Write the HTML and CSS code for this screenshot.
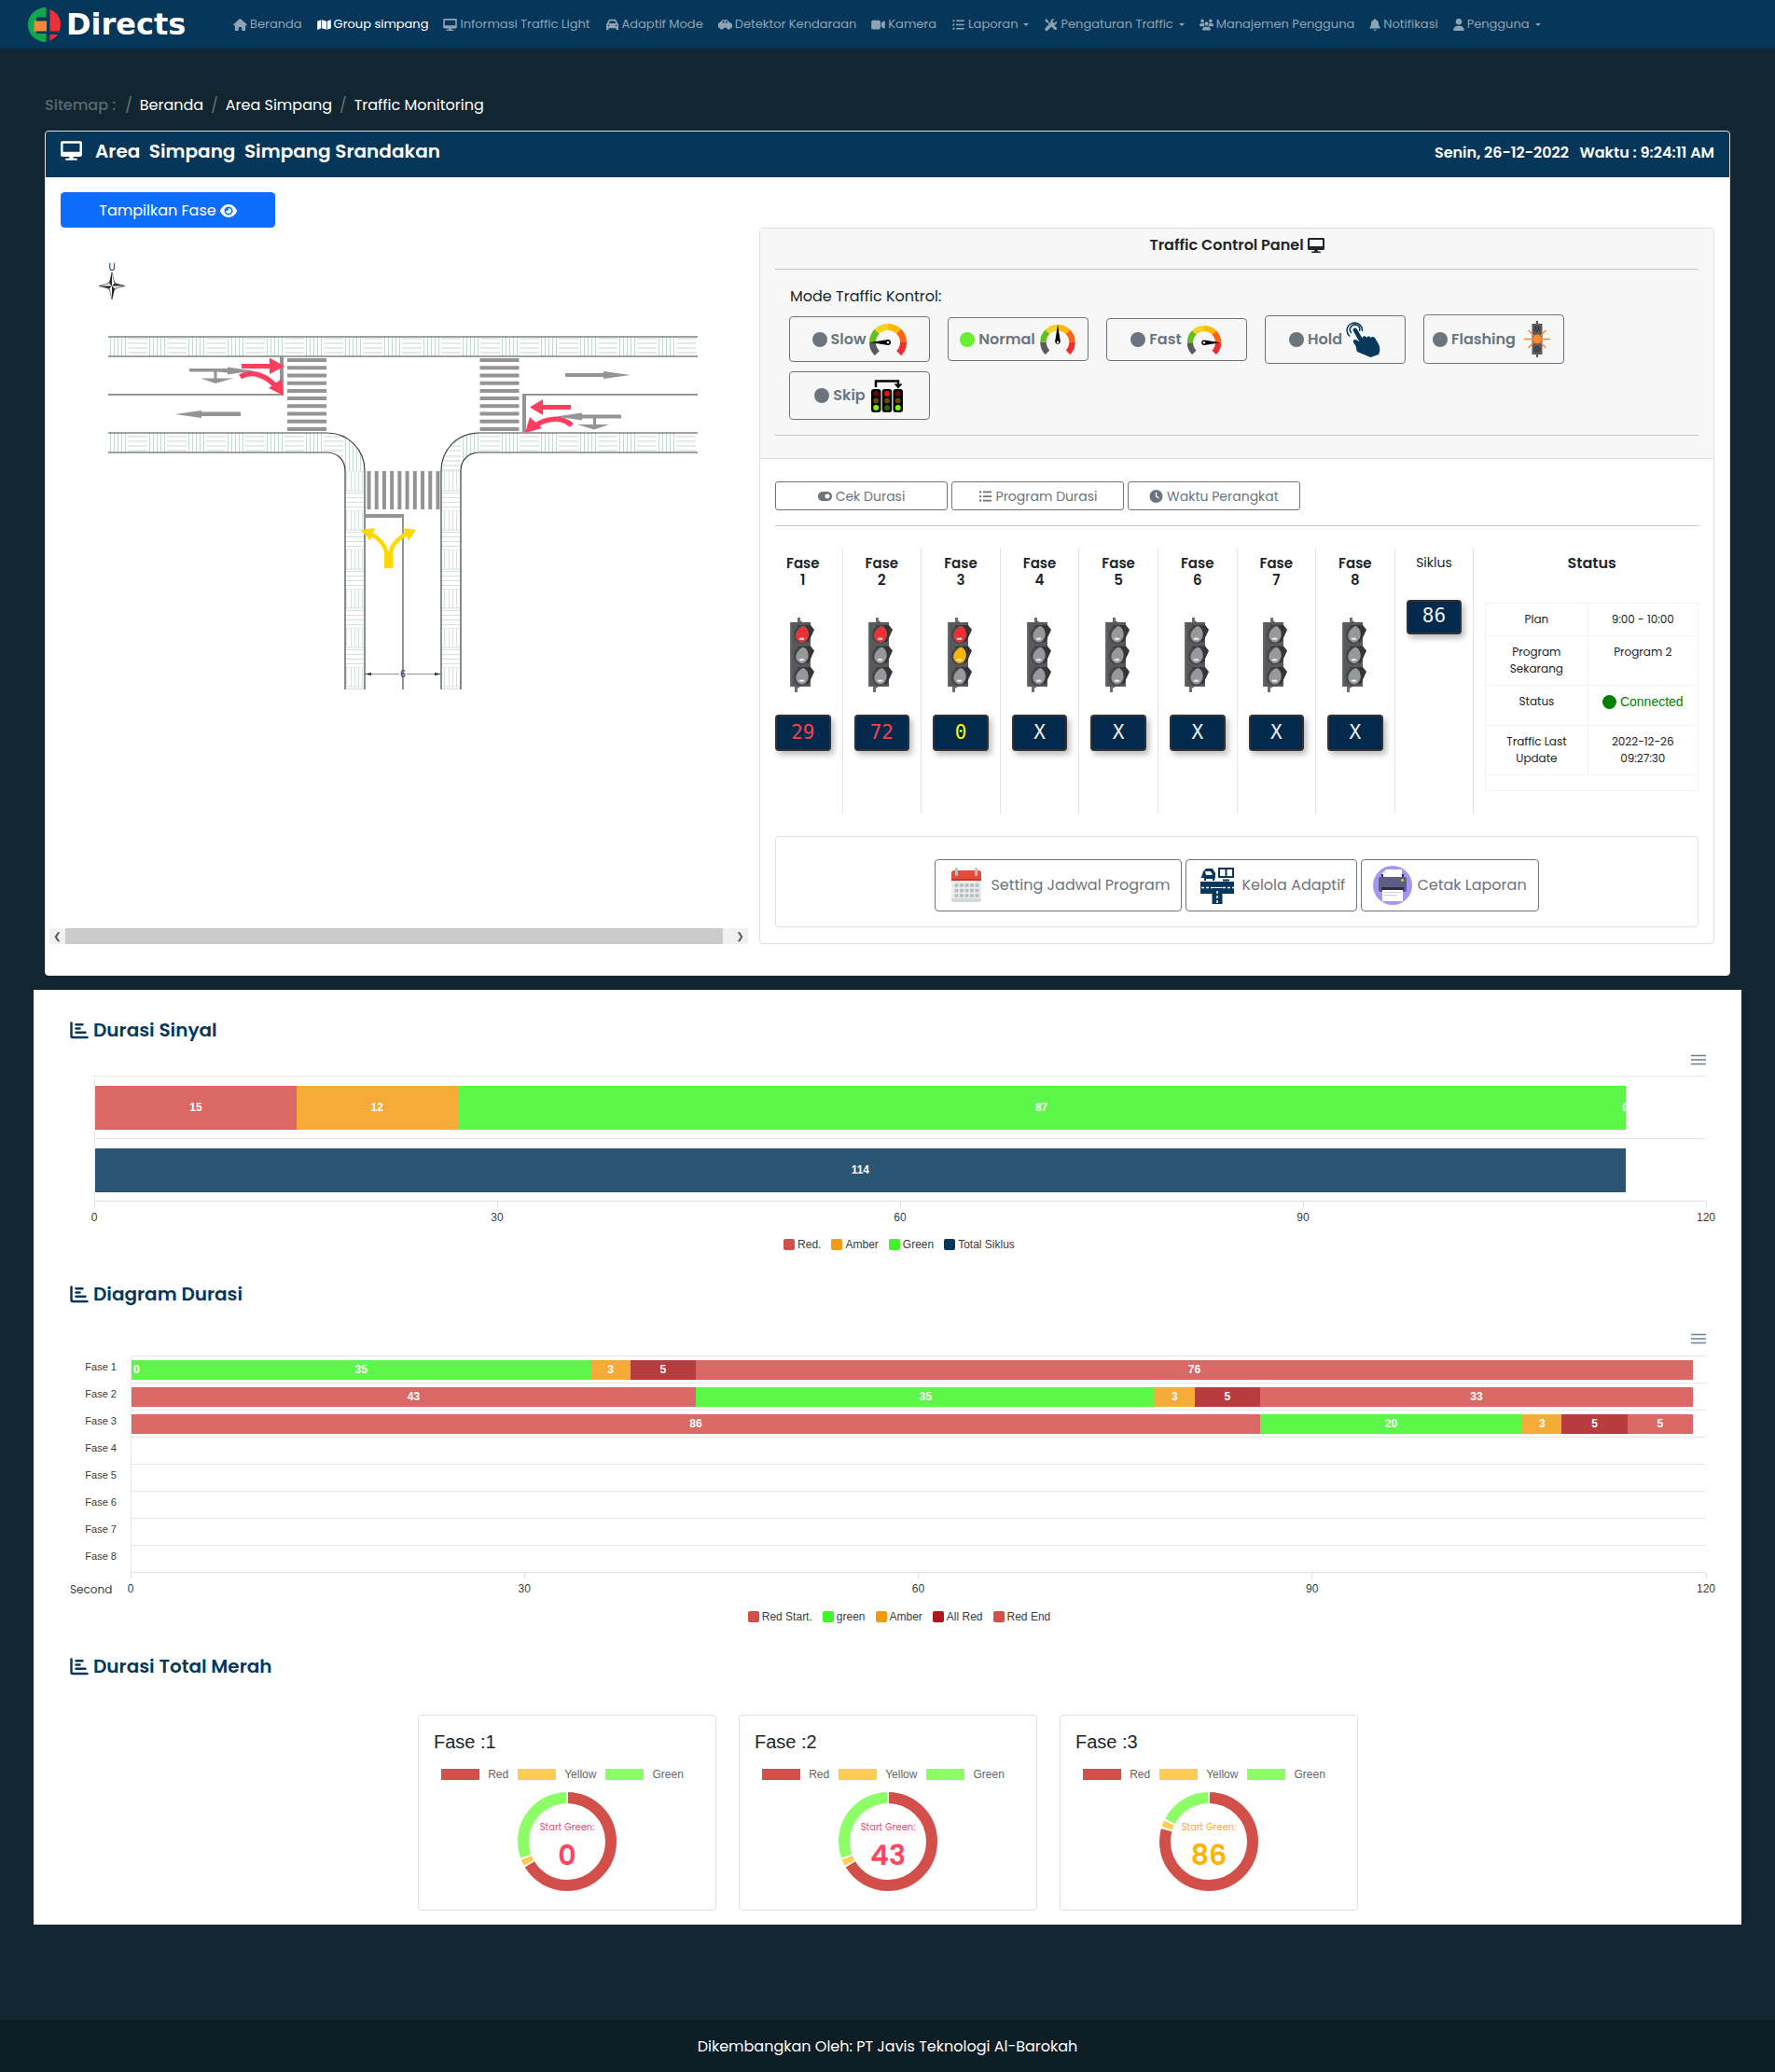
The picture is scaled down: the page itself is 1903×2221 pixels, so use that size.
FILE: index.html
```html
<!DOCTYPE html>
<html lang="id">
<head>
<meta charset="utf-8">
<meta name="viewport" content="width=device-width, initial-scale=1">
<title>Directs - Traffic Monitoring</title>
<link rel="stylesheet" href="styles.css">
</head>
<body>
<svg class="defs" aria-hidden="true">
  <symbol id="i-home" viewBox="0 0 576 512"><path d="M575.8 255.5c0 18-15 32.1-32 32.1h-32l.7 160.2c0 2.7-.2 5.4-.5 8.1V472c0 22.1-17.9 40-40 40H392c-22.1 0-40-17.9-40-40v-88c0-17.7-14.3-32-32-32h-64c-17.7 0-32 14.3-32 32v88c0 22.1-17.9 40-40 40h-80c-22.1 0-40-17.9-40-40V287.600H32c-18 0-32-14-32-32.100c0-9 3-17 10-24L266.400 8c7-7 15-8 22-8s15 2 21 7L564.800 231.500c8 7 12 15 11 24z"/></symbol>
  <symbol id="i-map" viewBox="0 0 576 512"><path d="M0 132c0-14 8-26 20-31L160 48v360L32 461c-16 6-32-4-32-20zM192 48l192 64v352l-192-64zM416 104l128-53c16-6 32 4 32 20v309c0 14-8 26-20 31l-140 53z"/></symbol>
  <symbol id="i-desktop" viewBox="0 0 576 512"><path d="M528 0H48C21.500 0 0 21.500 0 48v320c0 26.500 21.500 48 48 48h192l-16 48h-72c-13.300 0-24 10.700-24 24s10.700 24 24 24h272c13.300 0 24-10.700 24-24s-10.700-24-24-24h-72l-16-48h192c26.500 0 48-21.500 48-48V48c0-26.500-21.500-48-48-48zm-16 288H64V64h448v224z"/></symbol>
  <symbol id="i-car" viewBox="0 0 512 512"><path fill-rule="evenodd" d="M39 196 75 94c14-38 50-62 90-62h182c40 0 76 24 90 62l36 102c24 10 39 32 39 60v192c0 18-14 32-32 32h-32c-18 0-32-14-32-32v-48H96v48c0 18-14 32-32 32H32c-18 0-32-14-32-32V256c0-28 15-50 39-60zm71-4h292l-26-75c-5-13-16-21-29-21H165c-13 0-24 8-29 21zM96 256a32 32 0 1 0 0 64 32 32 0 0 0 0-64zm320 0a32 32 0 1 0 0 64 32 32 0 0 0 0-64z"/></symbol>
  <symbol id="i-carside" viewBox="0 0 640 512"><path fill-rule="evenodd" d="M170 60c18-18 42-28 66-28h140c30 0 58 14 76 38l70 90c62 4 118 54 118 120v80c0 18-14 32-32 32h-30a100 100 0 0 1-196 0H258a100 100 0 0 1-196 0H32c-18 0-32-14-32-32V224c0-35 24-62 56-64zm-16 100h134V96h-52c-10 0-18 3-24 10zm182 0h122l-58-50c-8-9-16-14-28-14h-36z"/><circle cx="160" cy="384" r="60"/><circle cx="480" cy="384" r="60"/></symbol>
  <symbol id="i-video" viewBox="0 0 576 512"><path d="M0 128c0-35.300 28.700-64 64-64h256c35.300 0 64 28.700 64 64v256c0 35.300-28.700 64-64 64H64c-35.300 0-64-28.700-64-64V128zM559.100 99.800c10.400 5.600 16.900 16.400 16.900 28.200v256c0 11.800-6.500 22.600-16.900 28.200s-23 5-32.900-1.600l-96-64-14.200-9.500V174.900l14.200-9.500 96-64c9.800-6.500 22.400-7.200 32.900-1.600z"/></symbol>
  <symbol id="i-list" viewBox="0 0 512 512"><path d="M20 48h72v80H20zM20 216h72v80H20zM20 384h72v80H20zM160 56h340v64H160zM160 224h340v64H160zM160 392h340v64H160z"/></symbol>
  <symbol id="i-tools" viewBox="0 0 512 512"><path d="M10 60 62 8l88 66v46l118 116-40 40L112 160H66zM296 270l76-18 126 126c20 22 20 60 0 84s-62 26-84 4L288 340z"/><path d="M500 110c18 52 6 100-28 132-30 28-78 38-118 26L132 490c-28 28-74 28-102 2s-28-72 0-102l226-224c-12-44 0-90 28-118 34-34 84-44 126-28l-72 76 12 68 64 12z"/></symbol>
  <symbol id="i-users" viewBox="0 0 640 512"><circle cx="130" cy="80" r="76"/><circle cx="510" cy="80" r="76"/><circle cx="320" cy="210" r="88"/><path d="M0 290c0-60 46-106 106-106h42c24 0 46 7 64 20-14 50 0 92 34 124H32c-18 0-32-18-32-38zM640 290c0-60-46-106-106-106h-42c-24 0-46 7-64 20 14 50 0 92-34 124h214c18 0 32-18 32-38zM128 482c0-72 60-130 132-130h120c72 0 132 58 132 130 0 18-14 30-30 30H158c-16 0-30-12-30-30z"/></symbol>
  <symbol id="i-bell" viewBox="0 0 448 512"><path d="M224 0c-17.700 0-32 14.300-32 32v19.200C119 66 64 130.600 64 208v18.800c0 47-17.300 92.400-48.500 127.600l-7.400 8.300c-8.400 9.400-10.400 22.900-5.300 34.400S19.400 416 32 416h384c12.600 0 24-7.400 29.200-18.900s3.100-25-5.300-34.400l-7.400-8.300C401.300 319.200 384 273.900 384 226.800V208c0-77.400-55-142-128-156.800V32c0-17.700-14.300-32-32-32zm45.300 493.300c12-12 18.700-28.300 18.700-45.300H160c0 17 6.700 33.300 18.700 45.300s28.300 18.700 45.300 18.700 33.300-6.700 45.300-18.700z"/></symbol>
  <symbol id="i-user" viewBox="0 0 448 512"><path d="M224 256a128 128 0 1 0 0-256 128 128 0 1 0 0 256zm-45.700 48C79.800 304 0 383.800 0 482.300 0 498.700 13.300 512 29.700 512h388.600c16.400 0 29.700-13.300 29.700-29.700 0-98.500-79.800-178.300-178.300-178.300z"/></symbol>
  <symbol id="i-eye" viewBox="0 0 576 512"><path d="M288 32c-80.800 0-145.500 36.800-192.600 80.600C48.600 156 17.300 208 2.500 243.700c-3.300 7.900-3.300 16.700 0 24.600C17.300 304 48.600 356 95.400 399.400 142.500 443.200 207.200 480 288 480s145.500-36.800 192.600-80.600c46.800-43.500 78.100-95.400 93-131.100 3.300-7.900 3.300-16.700 0-24.600-14.900-35.700-46.200-87.700-93-131.100C433.500 68.800 368.800 32 288 32zM144 256a144 144 0 1 1 288 0 144 144 0 1 1-288 0zm144-64c0 35.300-28.700 64-64 64-7.100 0-13.900-1.200-20.300-3.300-5.500-1.800-11.900 1.600-11.700 7.400.3 6.900 1.300 13.800 3.200 20.700 13.700 51.200 66.400 81.600 117.600 67.900s81.600-66.400 67.900-117.600c-11.100-41.500-47.800-69.400-88.600-71.100-5.800-.2-9.200 6.100-7.400 11.700 2.100 6.400 3.300 13.200 3.300 20.300z"/></symbol>
  <symbol id="i-toggle" viewBox="0 0 576 512"><path d="M192 64C86 64 0 150 0 256s86 192 192 192h192c106 0 192-86 192-192S490 64 384 64H192zm192 96a96 96 0 1 1 0 192 96 96 0 1 1 0-192z"/></symbol>
  <symbol id="i-clock" viewBox="0 0 512 512"><path d="M256 0a256 256 0 1 1 0 512A256 256 0 1 1 256 0zm-24 120v136c0 8 4 15.500 10.700 20l96 64c11 7.400 25.900 4.400 33.300-6.700s4.400-25.900-6.700-33.300L280 243.200V120c0-13.300-10.700-24-24-24s-24 10.700-24 24z"/></symbol>
  <symbol id="i-chart" viewBox="0 0 20 19"><path fill="none" stroke="currentColor" stroke-width="2.500" stroke-linecap="round" stroke-linejoin="round" d="M1.500 1.500V15.500a1.500 1.500 0 0 0 1.500 1.500H18.500M6.500 3.200h7M6.500 7.500h4M6.500 11.800h10"/></symbol>
  <symbol id="i-menu" viewBox="0 0 16 12"><path stroke="#6e8192" stroke-width="1.600" d="M0 1.500h16M0 6h16M0 10.500h16"/></symbol>
  <symbol id="i-dial" viewBox="0 0 40 35"><g fill="none" stroke-width="7"><path stroke="#5b5b5b" d="M8.300 32.700A16.500 16.500 0 0 1 3.500 21"/><path stroke="#67bf1b" d="M3.500 21A16.500 16.500 0 0 1 8.300 9.300"/><path stroke="#f3d321" d="M8.300 9.300A16.500 16.500 0 0 1 20 4.500"/><path stroke="#fdb908" d="M20 4.500A16.500 16.500 0 0 1 31.700 9.300"/><path stroke="#ff6410" d="M31.700 9.300A16.500 16.500 0 0 1 36.500 21"/><path stroke="#ed2d30" d="M36.500 21A16.500 16.500 0 0 1 31.700 32.700"/></g></symbol>
  <symbol id="lamp-body" viewBox="0 0 28 80"><path fill="#6d6e70" d="M8 0h3v3l6 5H8zM5 72h9l-6 4v4H5z"/><path fill="#58595b" d="M0 5h22v69H0z"/><path fill="#6d6e70" d="M0 5h1.500v69H0z"/><path fill="#353436" d="M8 8.500 22 8l4 5-6 13-8 1zM8 31 22 30.500l4 5-6 13-8 1zM8 53.500 22 53l4 5-6 13-8 1z"/><g fill="#454547"><ellipse cx="12" cy="18.500" rx="8" ry="9.500"/><ellipse cx="12" cy="41" rx="8" ry="9.500"/><ellipse cx="12" cy="63.500" rx="8" ry="9.500"/></g></symbol>
  <symbol id="lens" viewBox="0 0 15 19"><path fill="currentColor" d="M9 0c3 1 5.500 5 5.500 9.500S11 18.500 7.500 18.500 0.500 15 .5 11C.5 7 4 2 9 0z"/><ellipse cx="7" cy="14.500" rx="3.200" ry="1.400" fill="#fff" opacity=".75"/></symbol>
  <symbol id="lamp-off" viewBox="0 0 28 80"><use href="#lamp-body" width="28" height="80"/><g color="#97989b"><use href="#lens" x="5.500" y="9" width="15" height="18"/><use href="#lens" x="5.500" y="31.500" width="15" height="18"/><use href="#lens" x="5.500" y="54" width="15" height="18"/></g></symbol>
  <symbol id="lamp-red" viewBox="0 0 28 80"><use href="#lamp-off" width="28" height="80"/><use href="#lens" color="#ee2f33" x="5.500" y="9" width="15" height="18"/></symbol>
  <symbol id="lamp-amber" viewBox="0 0 28 80"><use href="#lamp-red" width="28" height="80"/><use href="#lens" color="#ffb300" x="5.500" y="31.500" width="15" height="18"/></symbol>
</svg>

<header class="navbar">
  <a class="brand" href="#">
    <svg width="36" height="37" viewBox="0 0 36 37"><path fill="#12a74f" d="M19.500 0v10.500H9V28h10.500v9C9 37 0 29 0 18.500S9 0 19.500 0z"/><path fill="#f4863a" d="M6.500 14.500h13.500v11H6.500z"/><path fill="#ee2f36" d="M23.500 2C31 5 35 11 35 18c0 2.500-.5 5-1.500 7.500H23.500zM23.500 29h8.500c-2 3-5 5-8.500 6.500z"/></svg>
    <span>Directs</span>
  </a>
  <nav class="menu">
    <a href="#"><svg class="ico"><use href="#i-home"/></svg>Beranda</a>
    <a href="#" class="active"><svg class="ico"><use href="#i-map"/></svg>Group simpang</a>
    <a href="#"><svg class="ico"><use href="#i-desktop"/></svg>Informasi Traffic Light</a>
    <a href="#"><svg class="ico"><use href="#i-car"/></svg>Adaptif Mode</a>
    <a href="#"><svg class="ico"><use href="#i-carside"/></svg>Detektor Kendaraan</a>
    <a href="#"><svg class="ico"><use href="#i-video"/></svg>Kamera</a>
    <a href="#" class="drop"><svg class="ico"><use href="#i-list"/></svg>Laporan</a>
    <a href="#" class="drop"><svg class="ico"><use href="#i-tools"/></svg>Pengaturan Traffic</a>
    <a href="#"><svg class="ico"><use href="#i-users"/></svg>Manajemen Pengguna</a>
    <a href="#"><svg class="ico narrow"><use href="#i-bell"/></svg>Notifikasi</a>
    <a href="#" class="drop"><svg class="ico narrow"><use href="#i-user"/></svg>Pengguna</a>
  </nav>
</header>

<main>
  <nav class="crumbs" aria-label="Sitemap">
    <span class="lead">Sitemap :</span><a href="#">Beranda</a><a href="#">Area Simpang</a><a href="#">Traffic Monitoring</a>
  </nav>

  <section class="panel">
    <header class="panel-head">
      <svg class="screen"><use href="#i-desktop"/></svg>
      <h1>Area&nbsp; Simpang&nbsp; Simpang Srandakan</h1>
      <time>Senin, 26-12-2022 &nbsp;&nbsp;Waktu : 9:24:11 AM</time>
    </header>
    <button class="show-phase">Tampilkan Fase <svg><use href="#i-eye"/></svg></button>
    <div class="columns">
      <div class="map">
        <svg class="junction" viewBox="13 0 749 500">
          <defs>
            <pattern id="tiles" width="42" height="21" patternUnits="userSpaceOnUse" y="100.500" x="76"><path fill="none" stroke="#c3d9d2" d="M2.500 0v21M6.500 0v21M10.500 0v21M14.500 0v21M18.500 0v21M21 2.500h21M21 7.500h21M21 12.500h21M21 17.500h21"/></pattern>
            <pattern id="slabs" width="21" height="42" patternUnits="userSpaceOnUse" x="330" y="245"><path fill="none" stroke="#d2e2dd" d="M1.500 0v21M6.500 0v21M10.500 0v21M14.500 0v21M18.500 0v21M0 23.500h21M0 28.500h21M0 33.500h21M0 38.500h21M0 21h21M0 0h21"/></pattern>
          </defs>
          <g fill="url(#tiles)">
            <path d="M76 101h632v21H76z"/>
            <path d="M76 204h234c24 0 41 18 41 41h-21c0-12-8-20-20-20H76zM708 204H474c-24 0-41 18-41 41h21c0-12 8-20 20-20h234z"/>
          </g>
          <path fill="url(#slabs)" d="M330 245h21v234h-21zM433 245h21v234h-21z"/>
          <g fill="none" stroke="#444" stroke-width="1.200">
            <path d="M76 101h632M76 122h632"/>
            <path d="M76 204h234c24 0 41 18 41 41v234M76 225h234c12 0 20 8 20 20v234"/>
            <path d="M708 204H474c-24 0-41 18-41 41v234M708 225H474c-12 0-20 8-20 20v234"/>
          </g>
          <g fill="none" stroke="#949494">
            <path stroke-width="2" d="M76 163h188M520 163h188M392 295v184"/>
            <path stroke-width="4" d="M262 122.500v41.500M522 162v41M351 293h42"/>
            <path stroke-width="42" stroke-dasharray="4 4.220" d="M289 124v79M495.500 124v79"/>
            <path stroke-width="41" stroke-dasharray="4 4.220" d="M353.500 265.500h78.500"/>
          </g>
          <g fill="#949494">
            <path d="M163 135h41v-1.500l28 4-28 4v-2l-11.500-1v7H210l-19 5.500-16-5.500h14.500v-7H163z"/>
            <path d="M218 181.500h-42v-1.500l-28 4 28 4v-2h42z"/>
            <path d="M566 140h41v-2l29 4-29 4v-2h-41z"/>
            <path d="M626 184.500h-42v-2l-28 4 28 4v-2l12 0v6.500h-17l18 5.500 16-5.500h-14v-6.500h27z"/>
          </g>
          <path fill="#ff3d5f" d="M219 130h30v-6.500l16 9-16 8.500v-6h-30zM264 164l-16-8 14-10zM572 174h-30v-6l-14 8.500 14 8.500v-6h30zM523 204l5-17 13 12z"/>
          <path fill="none" stroke="#ff3d5f" stroke-width="5.500" d="M217.500 144C230 136 247 143 257 156M573 196C562 186 545 188 533 197"/>
          <path fill="#ffd800" d="M347 308l15-2-5 13.500zM406 308l-14-2 6 13.500zM372 331h9v18h-9z"/>
          <path fill="none" stroke="#ffd800" stroke-width="4.500" d="M355 311c12 6 19 14 19.500 24M398 311c-12 6-19 14-19.500 24"/>
          <path fill="none" stroke="#777" stroke-width=".8" d="M351 462.500h37M396 462.500h37"/>
          <path d="M351 462.500l7-1.500v3zM433 462.500l-7-1.500v3z"/>
          <text x="392" y="466" class="dim">6</text>
          <text x="80" y="30" class="dim">U</text>
          <circle cx="80" cy="46.500" r="5.500" fill="none" stroke="#888" stroke-width=".7"/>
          <path fill="#fff" stroke="#222" stroke-width=".6" d="M80 32l2.800 11.700L94 46.500l-11.200 2.800L80 61l-2.800-11.700L66 46.500l11.200-2.800z"/>
          <path d="M80 32v14.500l-2.800-2.800zM80 61V46.500l2.800 2.800zM66 46.500h14l-2.800 2.800zM94 46.500H80l2.800-2.800z"/>
        </svg>
        <div class="scroller"><span>&#10094;</span><i></i><span>&#10095;</span></div>
      </div>

      <section class="control">
        <div class="modes">
          <h2>Traffic Control Panel <svg><use href="#i-desktop"/></svg></h2>
          <hr>
          <p>Mode Traffic Kontrol:</p>
          <div class="mode-list">
            <button><i></i>Slow<svg width="40" height="35" viewBox="0 0 40 35"><use href="#i-dial"/><path d="M1 21 20 18a3 3 0 0 1 0 6z"/><circle cx="20" cy="21" r="1.300" fill="#fff"/></svg></button>
            <button class="on"><i></i>Normal<svg width="40" height="33" viewBox="0 0 40 35"><use href="#i-dial"/><path d="M20 1l3 19a3 3 0 0 1-6 0z"/><circle cx="20" cy="21" r="1.300" fill="#fff"/></svg></button>
            <button><i></i>Fast<svg width="40" height="32" viewBox="0 0 40 35"><use href="#i-dial"/><path d="M39 21 20 18a3 3 0 0 0 0 6z"/><circle cx="20" cy="21" r="1.300" fill="#fff"/></svg></button>
            <button><i></i>Hold<svg width="38" height="38" viewBox="0 0 38 38"><g fill="none" stroke="#07375b" stroke-width="1.500"><path d="M4 15.500A8.200 8.200 0 1 1 17.500 10"/><path d="M6 12a5.200 5.200 0 1 1 8.500-2"/></g><path fill="#07375b" d="M8.500 7c1.500-1 3 0 3.800 1.500l5.200 9c.5-2.500 3.500-3 4.700-.5.500-2 3.500-2.300 4.600 0 .8-1.600 3.300-1.500 4.500.5l4 7c1.700 4 1.200 7-.3 10.500L26.500 38 12 32c-1-2-.5-4-1.500-6-1-2.500-3.500-4.500-2.500-6 1.500-2 4-.5 6.500 1.500L8 10c-.7-1.200-.5-2.300.5-3z"/></svg></button>
            <button><i></i>Flashing<svg width="38" height="39" viewBox="0 0 38 39"><path fill="#555658" d="M18 0h2v39h-2zM13.500 3h11v33h-11z"/><circle cx="19" cy="8.500" r="4.700" fill="#474749" stroke="#6e6f71"/><circle cx="19" cy="30.500" r="4.700" fill="#474749" stroke="#6e6f71"/><path stroke="#f58432" stroke-width="1.400" d="M5 19.500h9M24 19.500h9M9.500 10l6 6M28.500 10l-6 6M9.500 29l6-6M28.500 29l-6-6"/><circle cx="19" cy="19.500" r="5" fill="#fb8b32"/></svg></button>
            <button><i></i>Skip<svg width="38" height="38" viewBox="0 0 38 38"><path fill="none" stroke="#000" stroke-width="2.500" d="M7 10V3.500h24V8"/><path d="M26.500 6.500h9L31 11.500z"/><rect x="2" y="12" width="10.500" height="25" rx="3"/><rect x="13.700" y="12" width="10.500" height="25" rx="3"/><rect x="25.500" y="12" width="10.500" height="25" rx="3"/><g fill="#63090b"><circle cx="7.200" cy="17" r="3"/><circle cx="30.700" cy="17" r="3"/></g><circle cx="19" cy="17" r="3" fill="#ff0a0a"/><g fill="#654a04"><circle cx="7.200" cy="24.500" r="3"/><circle cx="19" cy="24.500" r="3"/><circle cx="30.700" cy="24.500" r="3"/></g><g fill="#73fb0d"><circle cx="7.200" cy="32" r="3"/><circle cx="30.700" cy="32" r="3"/></g><circle cx="19" cy="32" r="3" fill="#2c6303"/></svg></button>
          </div>
          <hr>
        </div>
        <div class="control-body">
          <div class="tools">
            <button><svg><use href="#i-toggle"/></svg>Cek Durasi</button>
            <button><svg><use href="#i-list"/></svg>Program Durasi</button>
            <button><svg><use href="#i-clock"/></svg>Waktu Perangkat</button>
          </div>
          <hr>
          <div class="phases">
            <div class="phase"><h3>Fase 1</h3><svg><use href="#lamp-red"/></svg><output class="red">29</output></div>
            <div class="phase"><h3>Fase 2</h3><svg><use href="#lamp-red"/></svg><output class="red">72</output></div>
            <div class="phase"><h3>Fase 3</h3><svg><use href="#lamp-amber"/></svg><output class="yellow">0</output></div>
            <div class="phase"><h3>Fase 4</h3><svg><use href="#lamp-off"/></svg><output>X</output></div>
            <div class="phase"><h3>Fase 5</h3><svg><use href="#lamp-off"/></svg><output>X</output></div>
            <div class="phase"><h3>Fase 6</h3><svg><use href="#lamp-off"/></svg><output>X</output></div>
            <div class="phase"><h3>Fase 7</h3><svg><use href="#lamp-off"/></svg><output>X</output></div>
            <div class="phase"><h3>Fase 8</h3><svg><use href="#lamp-off"/></svg><output>X</output></div>
            <div class="phase cycle"><h3>Siklus</h3><output>86</output></div>
            <div class="status">
              <h3>Status</h3>
              <table>
                <tr><th scope="row">Plan</th><td>9:00 - 10:00</td></tr>
                <tr><th scope="row">Program Sekarang</th><td>Program 2</td></tr>
                <tr class="link"><th scope="row">Status</th><td><span class="connected"><i></i>Connected</span></td></tr>
                <tr><th scope="row">Traffic Last Update</th><td>2022-12-26 09:27:30</td></tr>
                <tr><td colspan="2" class="blank"></td></tr>
              </table>
            </div>
          </div>
          <div class="actions">
            <button><svg width="42" height="42" viewBox="0 0 42 42"><rect x="5" y="5" width="32" height="34" rx="3" fill="#e9edef"/><path fill="#d3d8db" d="M5 35h32v1a3 3 0 0 1-3 3H8a3 3 0 0 1-3-3z"/><path fill="#e64c3c" d="M8 5h26a3 3 0 0 1 3 3v8H5V8a3 3 0 0 1 3-3z"/><path fill="#bf392b" d="M5 14h32v2H5z"/><path stroke="#bcc0c3" stroke-width="3" stroke-linecap="round" d="M10.500 3.500v6M31.500 3.500v6"/><path fill="none" stroke="#b8bdc0" stroke-width="3.500" stroke-dasharray="4 1.500" d="M8.500 21h26M8.500 26.500h26M8.500 32h26"/></svg>Setting Jadwal Program</button>
            <button><svg width="42" height="42" viewBox="0 0 42 42"><path fill="#07375b" d="M3 17h36v13H26.500v11h-11V30H3z"/><path fill="none" stroke="#fff" stroke-width="1.500" stroke-dasharray="3 2" d="M4 23.500h12M27 23.500h12M21 27v14"/><path fill="none" stroke="#fff" d="M15.500 23.500h11"/><path fill="none" stroke="#07375b" stroke-width="2" d="M23 3h15v9H23zM30.500 3v9M27 15.500h7"/><path fill="#07375b" d="M4 12l2-6 3-3h7l3 5v4l-1 4h-2v-2h-7v2H7v-3H3z"/><path fill="#fff" d="M8 6h6l2 4H9z"/></svg>Kelola Adaptif</button>
            <button><svg width="42" height="42" viewBox="0 0 42 42"><circle cx="21" cy="21" r="21" fill="#a596f5"/><path fill="#fff" d="M14 4h17v11H10V8z"/><path fill="#e4e3ef" d="M10 8l4-4v4z"/><path fill="#5f5d85" d="M8 12h26a2 2 0 0 1 2 2v12a2 2 0 0 1-2 2H8a2 2 0 0 1-2-2V14a2 2 0 0 1 2-2z"/><path fill="#2f2d4b" d="M9 9h2v3H9zM31 9h2v3h-2zM9 23h24v3H9z"/><circle cx="31.500" cy="15.500" r="1.600" fill="#a5e32c"/><path fill="#fff" d="M10 26h22v12H10z"/><path stroke="#cfcdda" d="M12 28.500h18M12 31.500h14"/></svg>Cetak Laporan</button>
          </div>
        </div>
      </section>
    </div>
  </section>

  <section class="reports">
    <h2 class="report-title"><svg><use href="#i-chart"/></svg>Durasi Sinyal</h2>
    <div class="chart signal">
      <button class="chart-menu" aria-label="Menu"><svg><use href="#i-menu"/></svg></button>
      <div class="plot">
        <div class="row"><b class="c-red" style="width:12.500%">15</b><b class="c-amber" style="width:10%">12</b><b class="c-green" style="width:72.500%">87</b><em>0</em></div>
        <div class="row"><b class="c-blue" style="width:95%">114</b></div>
      </div>
      <div class="axis"><span>0</span><span>30</span><span>60</span><span>90</span><span>120</span></div>
      <ul class="legend"><li><i class="k-red"></i>Red.</li><li><i class="k-amber"></i>Amber</li><li><i class="k-green"></i>Green</li><li><i class="k-blue"></i>Total Siklus</li></ul>
    </div>

    <h2 class="report-title"><svg><use href="#i-chart"/></svg>Diagram Durasi</h2>
    <div class="chart phases-chart">
      <button class="chart-menu" aria-label="Menu"><svg><use href="#i-menu"/></svg></button>
      <div class="plot-wrap">
        <div class="names"><span>Fase 1</span><span>Fase 2</span><span>Fase 3</span><span>Fase 4</span><span>Fase 5</span><span>Fase 6</span><span>Fase 7</span><span>Fase 8</span></div>
        <div class="plot">
          <div class="row"><em class="zero">0</em><b class="c-green" style="width:29.170%">35</b><b class="c-amber" style="width:2.500%">3</b><b class="c-dark" style="width:4.170%">5</b><b class="c-red" style="width:63.330%">76</b></div>
          <div class="row"><b class="c-red" style="width:35.840%">43</b><b class="c-green" style="width:29.170%">35</b><b class="c-amber" style="width:2.500%">3</b><b class="c-dark" style="width:4.170%">5</b><b class="c-red" style="width:27.500%">33</b></div>
          <div class="row"><b class="c-red" style="width:71.670%">86</b><b class="c-green" style="width:16.670%">20</b><b class="c-amber" style="width:2.500%">3</b><b class="c-dark" style="width:4.170%">5</b><b class="c-red" style="width:4.170%">5</b></div>
          <div class="row"></div><div class="row"></div><div class="row"></div><div class="row"></div><div class="row"></div>
        </div>
        <div class="unit">Second</div>
        <div class="axis"><span>0</span><span>30</span><span>60</span><span>90</span><span>120</span></div>
      </div>
      <ul class="legend"><li><i class="k-red"></i>Red Start.</li><li><i class="k-green"></i>green</li><li><i class="k-amber"></i>Amber</li><li><i class="k-dark"></i>All Red</li><li><i class="k-red"></i>Red End</li></ul>
    </div>

    <h2 class="report-title"><svg><use href="#i-chart"/></svg>Durasi Total Merah</h2>
    <div class="rings">
      <article>
        <h3>Fase :1</h3>
        <ul><li><i class="k-red"></i>Red</li><li><i class="k-yellow"></i>Yellow</li><li><i class="k-lime"></i>Green</li></ul>
        <svg class="ring" viewBox="-53 -53 106 106"><g fill="none" stroke-width="12" transform="rotate(-90)"><circle r="47" pathLength="1000" stroke="#d34f4a" stroke-dasharray="660 340" stroke-dashoffset="-3"/><circle r="47" pathLength="1000" stroke="#ffcd56" stroke-dasharray="21 979" stroke-dashoffset="-669"/><circle r="47" pathLength="1000" stroke="#8dff66" stroke-dasharray="301 699" stroke-dashoffset="-696"/></g><g fill="#ff4560"><text y="-12" class="ring-label">Start Green:</text><text y="25" class="ring-value">0</text></g></svg>
      </article>
      <article>
        <h3>Fase :2</h3>
        <ul><li><i class="k-red"></i>Red</li><li><i class="k-yellow"></i>Yellow</li><li><i class="k-lime"></i>Green</li></ul>
        <svg class="ring" viewBox="-53 -53 106 106"><g fill="none" stroke-width="12" transform="rotate(-90)"><circle r="47" pathLength="1000" stroke="#d34f4a" stroke-dasharray="660 340" stroke-dashoffset="-3"/><circle r="47" pathLength="1000" stroke="#ffcd56" stroke-dasharray="21 979" stroke-dashoffset="-669"/><circle r="47" pathLength="1000" stroke="#8dff66" stroke-dasharray="301 699" stroke-dashoffset="-696"/></g><g fill="#ff4560"><text y="-12" class="ring-label">Start Green:</text><text y="25" class="ring-value">43</text></g></svg>
      </article>
      <article>
        <h3>Fase :3</h3>
        <ul><li><i class="k-red"></i>Red</li><li><i class="k-yellow"></i>Yellow</li><li><i class="k-lime"></i>Green</li></ul>
        <svg class="ring" viewBox="-53 -53 106 106"><g fill="none" stroke-width="12" transform="rotate(-90)"><circle r="47" pathLength="1000" stroke="#d34f4a" stroke-dasharray="789 211" stroke-dashoffset="-3"/><circle r="47" pathLength="1000" stroke="#ffcd56" stroke-dasharray="21 979" stroke-dashoffset="-799"/><circle r="47" pathLength="1000" stroke="#8dff66" stroke-dasharray="170 830" stroke-dashoffset="-827"/></g><g fill="#ffb300"><text y="-12" class="ring-label">Start Green:</text><text y="25" class="ring-value">86</text></g></svg>
      </article>
    </div>
  </section>
</main>
<footer>Dikembangkan Oleh: PT Javis Teknologi Al-Barokah</footer>
</body>
</html>
```
FILE: styles.css
```css
:root {
  --sans: Poppins, Inter, sans-serif;
  --arial: "Liberation Sans", Arial, sans-serif;
  --navy: #06375a;
  --gray: #6c757d;
  --ink: #212529;
  --line: #dfdfdf;
}

* { box-sizing: border-box; }
body { margin: 0; background: #112630; color: var(--ink); font: 16px/24px var(--sans); }
h1, h2, h3, p, ul { margin: 0; padding: 0; font-weight: 400; }
ul { list-style: none; }
a { color: inherit; text-decoration: none; }
svg { fill: currentColor; flex: none; }
button { font: inherit; color: var(--gray); background: none; border: 1px solid var(--gray); border-radius: 4px; padding: 0; cursor: pointer; display: inline-flex; align-items: center; justify-content: center; }
hr { border: 0; height: 1px; background: #c3c4c5; margin: 0; }
.defs { position: absolute; width: 0; height: 0; }

/* top bar */
.navbar { height: 52px; background: var(--navy); display: flex; align-items: center; padding-left: 30px; }
.brand { display: flex; align-items: center; gap: 5px; width: 212px; color: #fff; font: 700 32px/36px "DejaVu Sans", sans-serif; }
.menu { display: flex; color: #8fa3b2; font-size: 13px; line-height: 20px; white-space: nowrap; }
.menu a { padding: 0 8px; display: flex; align-items: center; gap: 3px; }
.menu .active { color: #fff; }
.ico { width: 15px; height: 13px; }
.ico.narrow { width: 12px; }
.drop::after { content: ""; border: 3px solid transparent; border-top-color: currentColor; border-bottom: 0; margin-left: 3px; }

main { padding: 49px 36px 102px; }
.crumbs { display: flex; padding-left: 12px; color: #fff; line-height: 24px; margin-bottom: 15px; }
.crumbs .lead { color: #5b6971; font-weight: 500; margin-right: 2px; }
.crumbs a::before { content: "/"; color: #6c757d; padding: 0 8px; }

/* intersection panel */
.panel { margin: 0 12px; background: #fff; border: 1px solid var(--line); border-radius: 4px; padding-bottom: 33px; }
.panel-head { background: var(--navy); color: #fff; height: 49px; display: flex; align-items: center; padding: 0 16px 8px; border-radius: 3px 3px 0 0; }
.screen { width: 23px; height: 21px; }
.panel-head h1 { font-size: 20px; font-weight: 600; margin-left: 14px; }
.panel-head time { margin-left: auto; font-weight: 600; padding-top: 5px; }
.show-phase { margin: 16px 16px 0; width: 230px; height: 38px; background: #0d6efd; border-color: #0d6efd; color: #fff; gap: 4px; display: flex; padding-top: 1px; }
.show-phase svg { width: 18px; height: 16px; }
.columns { display: grid; grid-template-columns: 749fr 1024fr; gap: 12px; padding: 0 16px 0 4px; }
.map { display: flex; flex-direction: column; justify-content: space-between; padding-top: 16px; }
.junction { width: 100%; }
.dim { font: 10px var(--arial); text-anchor: middle; }
.scroller { display: flex; height: 17px; background: #f1f1f1; color: #505050; font: 10px/17px "DejaVu Sans", sans-serif; }
.scroller span { width: 17px; text-align: center; }
.scroller i { flex: 1; background: #cbcbcb; margin-right: 10px; }

.control { border: 1px solid var(--line); border-radius: 4px; }
.modes { background: #f7f7f7; border-bottom: 1px solid var(--line); padding: 6px 16px 24px; }
.modes h2 { display: flex; justify-content: center; align-items: center; gap: 4px; font-size: 16px; font-weight: 600; margin-bottom: 13px; }
.modes h2 svg { width: 18px; height: 16px; }
.modes p { margin: 17px 16px 7px; }
.mode-list { display: flex; flex-wrap: wrap; align-items: center; gap: 8px 19px; margin: 0 15px 16px; }
.mode-list button { width: 151px; padding: 6px 0; font-weight: 600; font-size: 16px; gap: 4px; }
.mode-list i { width: 16px; height: 16px; border-radius: 50%; background: var(--gray); }
.mode-list svg { fill: #000; }
.mode-list .on i { background: #6aef33; }
.control-body { padding: 24px 16px 17px; }
.tools { display: flex; gap: 4px; margin-bottom: 16px; }
.tools button { width: 185px; height: 31px; font-size: 14px; gap: 4px; border-radius: 3px; }
.tools svg { width: 15px; height: 14px; }

.phases { display: grid; grid-template-columns: repeat(9, 169fr) 505fr; margin: 24px -12px; height: 284px; }
.phase { border-right: 1px solid #e4e2e4; padding: 6px 12px 0 12px; display: flex; flex-direction: column; align-items: center; }
.phase h3 { width: 44px; height: 68px; text-align: center; font-size: 15px; line-height: 18px; font-weight: 600; padding-top: 1px; }
.phase svg { width: 28px; height: 80px; margin-bottom: 24px; }
.phase output { width: 100%; height: 39px; border: 2px solid #323232; border-radius: 4px; background: #032a4c; box-shadow: 3px 4px 6px #0004; color: #eee; text-align: center; font: 21px/34px "DejaVu Sans Mono", monospace; }
.phase .red { color: #ea4650; }
.phase .yellow { color: #f5f50a; }
.cycle h3 { font-weight: 400; font-size: 14px; height: 49px; padding-top: 0; }
.cycle output { height: 37px; line-height: 30px; }
.status { padding: 7px 12px 0; }
.status h3 { text-align: center; font-size: 16px; font-weight: 600; line-height: 18px; margin-bottom: 33px; }
table { width: 100%; border-collapse: collapse; table-layout: fixed; font-size: 12px; line-height: 18px; }
td, th { border: 1px solid #f2f2f2; padding: 8px; text-align: center; vertical-align: top; font-weight: 400; }
th { width: 48%; padding: 8px 20px; }
td { padding: 8px 20px; }
.link td { padding: 8px 0; }
.link { height: 43px; }
.blank { padding: 0; height: 17px; }
.connected { display: inline-flex; align-items: center; gap: 4px; color: #008000; font: 14px/18px var(--arial); }
.connected i { width: 15px; height: 15px; border-radius: 50%; background: #008000; }

.actions { border: 1px solid var(--line); border-radius: 4px; padding: 24px 12px 16px; display: flex; justify-content: center; gap: 4px; }
.actions button { height: 56px; padding: 0 12px; gap: 5px; }

/* reports */
.reports { background: #fff; margin-top: 15px; padding: 31px 38px 15px 39px; }
.report-title { display: flex; align-items: center; gap: 5px; height: 24px; color: var(--navy); font-size: 20px; font-weight: 600; }
.report-title svg { width: 20px; height: 19px; }
.chart { font: 12px/16px var(--arial); color: #373d3f; margin-bottom: 33px; }
.chart-menu { border: 0; display: block; margin-left: auto; height: 12px; width: 16px; }
.chart-menu svg { display: block; width: 16px; height: 12px; }
.signal { margin-top: 14px; }
.signal .chart-menu { margin-bottom: 11px; }
.plot { border-left: 1px solid #e8e8e8; border-bottom: 1px solid #e0e0e0; }
.signal .plot, .signal .axis { margin-left: 26px; }
.row { display: flex; align-items: center; height: 67px; border-top: 1px solid #e6e6e6; }
.row b { height: 47px; display: flex; align-items: center; justify-content: center; color: #fff; font-size: 12px; }
.row em { width: 0; color: #fff; font-style: normal; font-weight: 700; display: flex; justify-content: center; }
.row .zero { justify-content: flex-start; text-indent: 2px; z-index: 1; }
.c-red { background: #da6966; }
.c-amber { background: #f6aa37; }
.c-green { background: #5cf748; }
.c-blue { background: #2a5574; }
.c-dark { background: #b83c3d; }
.axis { display: flex; justify-content: space-between; }
.axis span { width: 0; display: flex; flex-direction: column; align-items: center; gap: 3px; }
.axis span::before { content: ""; width: 1px; height: 6px; background: #e0e0e0; }
.legend { display: flex; justify-content: center; gap: 11px; margin: 13px 0 0 24px; }
.legend li { display: flex; align-items: center; gap: 3px; }
.legend i { width: 12px; height: 12px; border-radius: 2px; }
.k-red { background: #d34f4a; }
.k-amber { background: #f59a0e; }
.k-green { background: #42f529; }
.k-blue { background: #06375a; }
.k-dark { background: #ac181b; }
.k-yellow { background: #ffcd56; }
.k-lime { background: #8dff66; }

.phases-chart { margin-top: 30px; margin-bottom: 33px; }
.phases-chart .chart-menu { margin-bottom: 12px; }
.plot-wrap { display: grid; grid-template-columns: 65px 1fr; }
.names { display: grid; grid-auto-rows: 29px; padding-right: 15px; text-align: right; font-size: 11px; line-height: 24px; }
.phases-chart .row { height: 29px; }
.phases-chart .row b { height: 21px; }
.unit { font: 12px/16px var(--sans); padding-top: 10px; }

.rings { display: flex; justify-content: center; gap: 24px; margin: 40px 0 0; }
.rings article { width: 320px; height: 210px; border: 1px solid var(--line); border-radius: 4px; padding: 16px; }
.rings h3 { font: 20px/24px var(--arial); }
.rings ul { display: flex; justify-content: center; gap: 10px; margin: 15px 10px 11px 0; font: 12px/16px var(--arial); color: #666; }
.rings li { display: flex; align-items: center; gap: 9px; }
.rings li i { width: 41px; height: 12px; }
.ring { display: block; width: 106px; height: 106px; margin: 0 auto; }
.ring-label { font: 10px var(--sans); text-anchor: middle; }
.ring-value { font: 600 30px var(--sans); text-anchor: middle; }

footer { background: #0d1e26; color: #fff; text-align: center; padding: 17px 0 15px; }
```
